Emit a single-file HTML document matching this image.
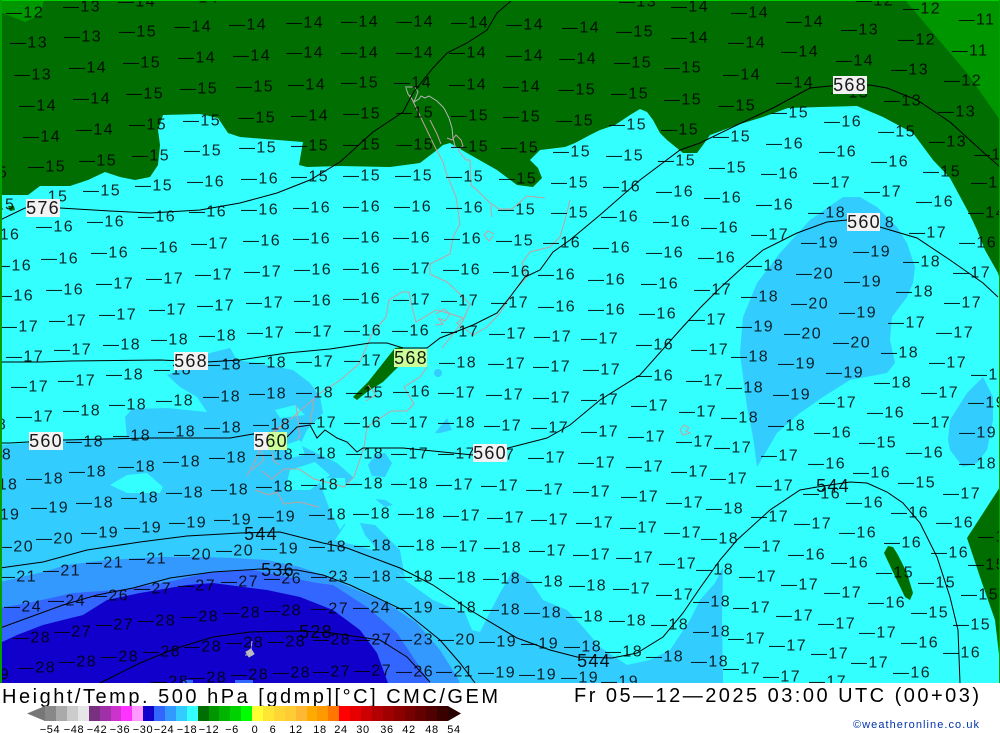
<!DOCTYPE html>
<html><head><meta charset="utf-8"><title>Height/Temp. 500 hPa</title>
<style>
html,body{margin:0;padding:0;background:#fff;width:1000px;height:733px;overflow:hidden}
svg{display:block}
text{font-family:"Liberation Sans",sans-serif;fill:#000}
.l text{font-size:16px;text-anchor:middle;dominant-baseline:central;letter-spacing:1.4px;fill-opacity:.85}
.b text{font-size:18px;text-anchor:middle;dominant-baseline:central;letter-spacing:1.2px;fill-opacity:.9}
.c path{fill:none;stroke:#000;stroke-width:1}
.k path{fill:none;stroke:#c4a0a0;stroke-width:1}
.t text{font-size:11px;text-anchor:middle;letter-spacing:.6px}
</style></head><body>
<svg width="1000" height="733" viewBox="0 0 1000 733" xmlns="http://www.w3.org/2000/svg">
<rect width="1000" height="733" fill="#fff"/>
<rect width="1000" height="683" fill="#33ffff"/>
<!-- dark green -->
<polygon fill="#006e00" points="0,0 1000,0 1000,280 998,273 985,250 977,230 970,215 950,178 933,160 913,133 883,117 857,106 820,107 788,108 763,117 737,125 710,135 703,145 697,153 683,153 667,140 660,133 653,120 647,112 640,109 630,115 615,125 600,130 590,135 575,143 565,147 540,150 530,160 538,168 542,178 533,187 517,185 497,170 467,153 450,143 443,145 437,150 420,163 390,167 340,166 307,167 299,165 303,142 240,137 228,133 218,118 200,114 163,115 158,130 160,145 158,165 150,177 135,180 120,177 105,172 88,180 70,186 40,186 28,195 0,195"/>
<polygon fill="#009600" points="905,0 1000,0 1000,120 967,73 933,33"/>
<polygon fill="#009600" points="0,0 44,0 40,15 25,22 0,12"/>
<polygon fill="#006e00" points="1000,487 967,538 980,577 995,620 1000,663"/>
<polygon fill="#006e00" points="888,546 884,553 892,570 905,597 910,600 913,593 907,573 898,555 893,547"/>
<polygon fill="#006e00" points="8,206 14,206 15,210 10,211"/>
<!-- mid blue -->
<polygon fill="#33ccff" points="843,197 810,220 780,253 757,283 743,317 740,353 747,407 753,437 757,467 763,457 777,433 800,413 823,397 850,380 887,373 895,363 890,340 892,317 907,297 913,283 915,267 907,243 897,227 877,207 860,197"/>
<polygon fill="#33ccff" points="983,377 967,393 950,420 948,440 950,450 963,467 977,463 987,450 993,420 993,397"/>
<polygon fill="#33ccff" points="0,445 67,440 127,437 125,417 132,409 167,408 207,412 197,397 180,387 167,375 187,367 210,353 230,348 237,360 267,365 293,370 310,383 320,397 323,413 307,430 300,445 337,463 353,477 343,490 345,525 335,540 380,552 405,580 433,600 445,605 465,613 472,630 480,632 490,612 500,593 513,570 530,580 543,600 567,610 583,627 600,647 627,665 650,660 670,650 690,620 700,600 715,583 723,567 722,617 723,683 0,683"/>
<polygon fill="#33ccff" points="360,523 375,525 400,550 405,578 390,565 365,535"/>
<polygon fill="#33ccff" points="368,465 375,455 385,453 392,463 385,477 372,476"/>
<polygon fill="#33ccff" points="435,433 447,418 452,430 440,433"/>
<circle cx="438" cy="373" r="4" fill="#33ccff"/>
<polygon fill="#33ccff" points="375,499 385,500 393,505 385,507"/>
<!-- cyan holes -->
<polygon fill="#33ffff" points="110,485 127,475 147,473 163,487 160,493 127,493"/>
<polygon fill="#33ffff" points="275,410 295,405 305,415 280,418"/>
<polygon fill="#33ffff" points="290,470 315,462 330,475 310,490 285,490"/>
<polygon fill="#33ffff" points="285,445 300,440 305,455 290,458"/>
<polygon fill="#33ffff" points="318,478 345,478 347,520 340,530 330,510"/>
<!-- bands -->
<polygon fill="#3399ff" points="0,582 43,572 67,565 107,560 160,557 200,557 233,558 267,560 300,567 330,578 350,587 387,603 417,623 440,650 457,677 460,683 0,683"/>
<polygon fill="#3366ff" points="0,608 33,602 73,593 117,590 163,583 207,573 253,570 287,577 317,583 333,585 367,607 397,633 417,663 430,683 0,683"/>
<polygon fill="#1100cc" points="0,643 17,635 43,625 83,615 107,600 140,593 187,585 213,583 267,590 300,597 333,610 360,630 377,653 388,683 0,683"/>
<rect x="183" y="680" width="10" height="3" fill="#3366ff"/>
<rect x="235" y="680" width="18" height="3" fill="#3366ff"/>
<!-- island over -->
<polygon fill="#006e00" points="395,348 403,347 400,358 398,367 383,382 367,392 357,400 353,397 368,382 387,358"/>
<!-- coast -->
<g class="k">
<path style="stroke:#b4b4b4" d="M405,87l10,0l3,5l-4,10l-6,-8l-2,-6M414,102l5,-3l2,-3l4,2l4,-2l8,5l6,6l2,3l4,8l3,10l1,10l2,8l-3,3"/>
<path d="M430,120l7,14l4,10M447,138l5,2l4,-5l5,5l2,6l-5,4l8,10l4,0l1,25l8,7l10,10l10,7l13,0l15,-13l18,2M570,200l-5,20l-5,17l-10,10l-20,5l-8,11l5,14l-12,13l-15,23l-13,14l-14,8l-16,-12l6,-5l-15,-5l-12,-3l-20,12l-4,-15l-3,-15l-7,0l-13,8l-3,17l-14,17l-13,30l-20,17l-20,13l-27,24l-27,20l-10,23l-8,15"/>
<path d="M410,95l25,52l8,15l3,10l10,25l4,27l-7,13l-3,17l-20,10l0,10l17,8l13,12l10,10l-7,17l-13,17l-8,10"/>
<path d="M427,367l-7,10l-16,10l10,17l-7,7l-16,0l-24,16l-3,20l-10,30l-10,10l-10,-3l-20,-5l-15,-10l-15,0l-12,10l-10,-8M252,470l12,-10l-4,-15l6,-10l12,-5l8,-8M255,490l14,5l8,-3l7,12l15,-2l20,5M270,435l3,25l6,5"/>
<path d="M436,314l8,-5l6,5l-5,7l-7,-3l5,6l-8,1M491,205l0,6l1,6M493,236l-4,5l-5,-6l4,-4l6,3M680,430l4,-5l5,3l-3,3l4,2l-7,2zM368,385l8,10l-10,6M296,405l4,30l-3,5M310,425l4,-25"/>
</g>
<path d="M246,652l5,-3l1,-8l-1,8l3,5l-5,3zM245,655h8" fill="#bbb" stroke="#bbb"/>
<!-- contours -->
<g class="c">
<path d="M0,220L25,208L60,208L110,211L150,213L200,210L240,203L277,193L310,180L340,162L373,132L403,112L413,93L433,68L447,53L467,43L487,30L497,13L512,0"/>
<path d="M0,362L40,362L70,361L160,360L207,362L240,360L287,353L330,349L370,343L387,343L403,348L427,348L440,338L473,325L497,313L510,297L525,277L540,270L553,252L570,240L600,215L640,180L680,150L700,143L737,125L773,108L797,95L810,88L830,86L870,85L887,88L917,100L950,122L983,152L1000,167"/>
<path d="M0,443L10,443L63,440L150,438L230,438L253,434L287,437L297,427L310,425L317,438L325,430L337,438L347,442L357,452L363,448L403,448L473,455L508,448L547,438L570,425L600,400L640,375L680,330L700,308L720,288L743,267L763,250L797,233L827,222L847,220L880,227L917,238L950,260L983,283L998,297"/>
<path d="M0,568L43,562L87,550L140,542L187,536L240,533L280,532L323,543L347,548L400,568L433,585L470,610L517,638L550,650L577,657L612,658L637,653L663,637L683,613L700,588L720,560L737,540L770,510L800,490L817,487L850,482L867,483L887,492L903,503L920,523L937,557L950,597L958,630L960,683"/>
<path d="M0,628L63,605L97,595L133,588L170,578L213,572L260,569L297,570L323,575L350,585L403,610L440,640L460,663L475,683"/>
<path d="M100,683L140,663L177,648L213,637L250,632L300,631L332,633L380,640L407,657L430,682"/>
</g>
<!-- value labels -->
<g class="l">
<text x="25" y="13">—12</text><text x="82" y="7">—13</text><text x="137" y="2">—14</text><text x="200" y="-2">—14</text><text x="638" y="2">—13</text><text x="690" y="7">—14</text><text x="750" y="13">—14</text><text x="805" y="22">—14</text><text x="860" y="30">—13</text><text x="917" y="40">—12</text><text x="970" y="51">—11</text><text x="875" y="1">—12</text><text x="922" y="9">—12</text><text x="977" y="20">—11</text>
<text x="29" y="43">—13</text><text x="83" y="37">—13</text><text x="138" y="32">—15</text><text x="193" y="27">—14</text><text x="248" y="25">—14</text><text x="305" y="23">—14</text><text x="360" y="22">—14</text><text x="415" y="22">—14</text><text x="470" y="23">—14</text><text x="525" y="25">—14</text><text x="581" y="28">—14</text><text x="635" y="32">—15</text><text x="690" y="38">—14</text><text x="747" y="43">—14</text><text x="800" y="52">—14</text><text x="855" y="61">—14</text><text x="910" y="70">—13</text><text x="963" y="81">—12</text>
<text x="33" y="75">—13</text><text x="88" y="68">—14</text><text x="142" y="63">—15</text><text x="197" y="58">—14</text><text x="252" y="56">—14</text><text x="305" y="53">—14</text><text x="360" y="53">—14</text><text x="415" y="53">—14</text><text x="468" y="53">—14</text><text x="525" y="56">—14</text><text x="578" y="59">—14</text><text x="633" y="63">—15</text><text x="683" y="68">—15</text><text x="742" y="75">—14</text><text x="795" y="83">—14</text><text x="850" y="93">—13</text><text x="903" y="101">—13</text><text x="957" y="112">—13</text>
<text x="38" y="106">—14</text><text x="92" y="99">—14</text><text x="145" y="94">—15</text><text x="199" y="89">—15</text><text x="255" y="87">—15</text><text x="307" y="85">—14</text><text x="360" y="83">—15</text><text x="413" y="83">—14</text><text x="468" y="85">—14</text><text x="522" y="87">—14</text><text x="577" y="90">—15</text><text x="630" y="94">—15</text><text x="683" y="100">—15</text><text x="737" y="106">—15</text><text x="790" y="113">—15</text><text x="843" y="122">—16</text><text x="897" y="132">—15</text><text x="948" y="142">—13</text><text x="993" y="155">—13</text>
<text x="-2" y="143">4</text><text x="42" y="137">—14</text><text x="95" y="130">—14</text><text x="148" y="125">—15</text><text x="202" y="121">—15</text><text x="257" y="118">—15</text><text x="310" y="116">—14</text><text x="362" y="114">—15</text><text x="415" y="113">—15</text><text x="470" y="116">—15</text><text x="522" y="117">—15</text><text x="575" y="121">—15</text><text x="628" y="125">—15</text><text x="680" y="130">—15</text><text x="732" y="137">—15</text><text x="785" y="144">—16</text><text x="838" y="152">—16</text><text x="890" y="162">—16</text><text x="942" y="172">—15</text><text x="990" y="183">—15</text>
<text x="3" y="173">5</text><text x="47" y="167">—15</text><text x="98" y="161">—15</text><text x="151" y="156">—15</text><text x="203" y="151">—15</text><text x="258" y="148">—15</text><text x="310" y="146">—15</text><text x="362" y="145">—15</text><text x="415" y="145">—15</text><text x="470" y="147">—15</text><text x="520" y="148">—15</text><text x="572" y="152">—15</text><text x="625" y="156">—15</text><text x="677" y="161">—15</text><text x="728" y="168">—15</text><text x="780" y="174">—16</text><text x="832" y="183">—17</text><text x="883" y="192">—17</text><text x="935" y="202">—16</text><text x="987" y="213">—14</text>
<text x="5" y="205">15</text><text x="58" y="197">15</text><text x="102" y="191">—15</text><text x="154" y="186">—15</text><text x="206" y="182">—16</text><text x="260" y="179">—16</text><text x="310" y="177">—15</text><text x="362" y="176">—15</text><text x="414" y="176">—15</text><text x="465" y="177">—15</text><text x="518" y="179">—15</text><text x="570" y="183">—15</text><text x="622" y="187">—16</text><text x="675" y="192">—16</text><text x="723" y="198">—16</text><text x="775" y="205">—16</text><text x="827" y="213">—18</text><text x="890" y="223">8</text><text x="928" y="233">—17</text><text x="978" y="243">—16</text>
<text x="10" y="235">16</text><text x="55" y="227">—16</text><text x="106" y="222">—16</text><text x="157" y="217">—16</text><text x="208" y="212">—16</text><text x="260" y="210">—16</text><text x="312" y="208">—16</text><text x="362" y="207">—16</text><text x="413" y="207">—16</text><text x="465" y="208">—16</text><text x="517" y="210">—15</text><text x="570" y="213">—15</text><text x="620" y="217">—16</text><text x="672" y="222">—16</text><text x="720" y="228">—16</text><text x="770" y="235">—17</text><text x="820" y="243">—19</text><text x="872" y="252">—19</text><text x="922" y="262">—18</text><text x="972" y="273">—17</text>
<text x="13" y="266">—16</text><text x="60" y="259">—16</text><text x="110" y="253">—16</text><text x="160" y="248">—16</text><text x="210" y="244">—17</text><text x="262" y="241">—16</text><text x="312" y="239">—16</text><text x="362" y="238">—16</text><text x="412" y="238">—16</text><text x="463" y="239">—16</text><text x="515" y="241">—15</text><text x="562" y="243">—16</text><text x="612" y="248">—16</text><text x="665" y="253">—16</text><text x="717" y="258">—16</text><text x="765" y="266">—18</text><text x="815" y="274">—20</text><text x="863" y="282">—19</text><text x="915" y="292">—18</text><text x="963" y="303">—17</text>
<text x="15" y="296">—16</text><text x="65" y="290">—16</text><text x="115" y="284">—17</text><text x="165" y="279">—17</text><text x="214" y="275">—17</text><text x="263" y="272">—17</text><text x="313" y="270">—16</text><text x="362" y="269">—16</text><text x="412" y="269">—17</text><text x="462" y="270">—16</text><text x="512" y="272">—16</text><text x="557" y="275">—16</text><text x="607" y="280">—16</text><text x="660" y="284">—16</text><text x="713" y="290">—17</text><text x="760" y="297">—18</text><text x="810" y="304">—20</text><text x="858" y="313">—19</text><text x="907" y="323">—17</text><text x="955" y="333">—17</text>
<text x="20" y="327">—17</text><text x="68" y="321">—17</text><text x="118" y="315">—17</text><text x="168" y="310">—17</text><text x="216" y="306">—17</text><text x="265" y="303">—17</text><text x="313" y="301">—16</text><text x="362" y="299">—16</text><text x="412" y="300">—17</text><text x="460" y="301">—17</text><text x="510" y="303">—17</text><text x="557" y="307">—16</text><text x="607" y="310">—16</text><text x="658" y="314">—16</text><text x="708" y="320">—17</text><text x="755" y="327">—19</text><text x="803" y="334">—20</text><text x="852" y="343">—20</text><text x="900" y="353">—18</text><text x="948" y="363">—17</text>
<text x="25" y="357">—17</text><text x="73" y="350">—17</text><text x="122" y="345">—18</text><text x="170" y="340">—18</text><text x="218" y="336">—18</text><text x="266" y="333">—17</text><text x="314" y="332">—17</text><text x="363" y="331">—16</text><text x="411" y="331">—16</text><text x="460" y="332">—17</text><text x="508" y="334">—17</text><text x="553" y="337">—17</text><text x="600" y="339">—17</text><text x="655" y="345">—16</text><text x="710" y="350">—17</text><text x="750" y="357">—18</text><text x="797" y="364">—19</text><text x="845" y="373">—19</text><text x="893" y="383">—18</text><text x="940" y="393">—17</text><text x="990" y="375">—17</text>
<text x="30" y="387">—17</text><text x="77" y="381">—17</text><text x="125" y="375">—18</text><text x="173" y="370">—18</text><text x="223" y="365">—18</text><text x="268" y="363">—18</text><text x="315" y="362">—17</text><text x="363" y="361">—17</text><text x="458" y="363">—18</text><text x="507" y="364">—17</text><text x="552" y="367">—17</text><text x="602" y="370">—17</text><text x="655" y="376">—16</text><text x="705" y="381">—17</text><text x="745" y="388">—18</text><text x="792" y="395">—19</text><text x="838" y="403">—17</text><text x="886" y="413">—16</text><text x="932" y="423">—17</text><text x="987" y="403">—19</text>
<text x="35" y="417">—17</text><text x="82" y="411">—18</text><text x="128" y="405">—18</text><text x="175" y="401">—18</text><text x="222" y="397">—18</text><text x="268" y="394">—18</text><text x="315" y="393">—18</text><text x="365" y="393">—15</text><text x="412" y="392">—16</text><text x="457" y="393">—17</text><text x="505" y="395">—17</text><text x="552" y="398">—17</text><text x="600" y="400">—17</text><text x="650" y="406">—17</text><text x="698" y="412">—17</text><text x="740" y="418">—18</text><text x="787" y="426">—18</text><text x="833" y="433">—16</text><text x="878" y="443">—15</text><text x="925" y="453">—16</text><text x="978" y="433">—19</text>
<text x="2" y="425">8</text><text x="85" y="442">—18</text><text x="132" y="436">—18</text><text x="177" y="432">—18</text><text x="223" y="428">—18</text><text x="272" y="425">—18</text><text x="318" y="423">—17</text><text x="363" y="423">—16</text><text x="410" y="423">—17</text><text x="457" y="423">—18</text><text x="503" y="426">—17</text><text x="550" y="428">—17</text><text x="600" y="432">—17</text><text x="647" y="437">—17</text><text x="695" y="442">—17</text><text x="733" y="448">—17</text><text x="780" y="456">—17</text><text x="827" y="464">—16</text><text x="872" y="473">—16</text><text x="917" y="483">—15</text><text x="978" y="464">—18</text>
<text x="7" y="455">8</text><text x="88" y="472">—18</text><text x="137" y="467">—18</text><text x="182" y="462">—18</text><text x="228" y="458">—18</text><text x="275" y="455">—18</text><text x="318" y="454">—18</text><text x="365" y="454">—18</text><text x="410" y="454">—17</text><text x="457" y="454">—17</text><text x="510" y="455">7</text><text x="547" y="458">—17</text><text x="597" y="463">—17</text><text x="645" y="467">—17</text><text x="690" y="472">—17</text><text x="729" y="479">—17</text><text x="775" y="486">—17</text><text x="822" y="494">—16</text><text x="865" y="503">—16</text><text x="910" y="513">—16</text><text x="962" y="494">—17</text>
<text x="8" y="485">18</text><text x="45" y="479">—18</text><text x="50" y="508">—19</text><text x="95" y="503">—18</text><text x="140" y="498">—18</text><text x="185" y="493">—18</text><text x="230" y="490">—18</text><text x="275" y="487">—18</text><text x="320" y="485">—18</text><text x="365" y="484">—18</text><text x="410" y="484">—18</text><text x="455" y="485">—17</text><text x="500" y="486">—17</text><text x="545" y="490">—17</text><text x="592" y="492">—17</text><text x="640" y="497">—17</text><text x="685" y="503">—17</text><text x="725" y="509">—18</text><text x="770" y="517">—17</text><text x="813" y="524">—17</text><text x="858" y="533">—16</text><text x="903" y="543">—16</text><text x="955" y="523">—16</text>
<text x="10" y="515">19</text><text x="15" y="547">—20</text><text x="55" y="539">—20</text><text x="100" y="533">—19</text><text x="143" y="528">—19</text><text x="188" y="523">—19</text><text x="233" y="520">—19</text><text x="277" y="517">—19</text><text x="328" y="515">—18</text><text x="372" y="514">—18</text><text x="417" y="514">—18</text><text x="462" y="516">—17</text><text x="506" y="518">—17</text><text x="550" y="520">—17</text><text x="595" y="523">—17</text><text x="639" y="528">—17</text><text x="683" y="533">—17</text><text x="720" y="539">—18</text><text x="763" y="547">—17</text><text x="807" y="555">—16</text><text x="850" y="563">—16</text><text x="895" y="573">—15</text><text x="950" y="553">—16</text><text x="997" y="537">—16</text>
<text x="18" y="577">—21</text><text x="62" y="571">—21</text><text x="105" y="563">—21</text><text x="148" y="559">—21</text><text x="193" y="555">—20</text><text x="235" y="551">—20</text><text x="280" y="549">—19</text><text x="328" y="547">—18</text><text x="373" y="546">—18</text><text x="417" y="546">—18</text><text x="460" y="547">—17</text><text x="503" y="548">—18</text><text x="548" y="551">—17</text><text x="592" y="555">—17</text><text x="635" y="558">—17</text><text x="678" y="564">—17</text><text x="715" y="570">—18</text><text x="758" y="577">—17</text><text x="800" y="585">—17</text><text x="843" y="593">—17</text><text x="887" y="603">—16</text><text x="937" y="583">—15</text><text x="987" y="565">—15</text>
<text x="23" y="607">—24</text><text x="67" y="601">—24</text><text x="110" y="596">—26</text><text x="153" y="589">—27</text><text x="197" y="586">—27</text><text x="240" y="582">—27</text><text x="283" y="579">—26</text><text x="330" y="577">—23</text><text x="373" y="577">—18</text><text x="415" y="577">—18</text><text x="458" y="578">—18</text><text x="502" y="579">—18</text><text x="545" y="582">—18</text><text x="588" y="586">—18</text><text x="632" y="589">—17</text><text x="675" y="595">—17</text><text x="712" y="602">—18</text><text x="752" y="608">—17</text><text x="795" y="616">—17</text><text x="837" y="624">—17</text><text x="878" y="633">—17</text><text x="930" y="613">—15</text><text x="980" y="595">—15</text>
<text x="-2" y="647">6</text><text x="32" y="638">—28</text><text x="73" y="632">—27</text><text x="115" y="625">—27</text><text x="157" y="621">—28</text><text x="200" y="617">—28</text><text x="242" y="613">—28</text><text x="283" y="611">—28</text><text x="330" y="609">—27</text><text x="372" y="608">—24</text><text x="415" y="608">—19</text><text x="458" y="608">—18</text><text x="502" y="610">—18</text><text x="543" y="613">—18</text><text x="585" y="617">—18</text><text x="628" y="621">—18</text><text x="670" y="625">—18</text><text x="712" y="632">—18</text><text x="747" y="639">—17</text><text x="788" y="646">—17</text><text x="830" y="654">—17</text><text x="870" y="663">—17</text><text x="920" y="643">—16</text><text x="972" y="625">—15</text>
<text x="5" y="675">9</text><text x="37" y="668">—28</text><text x="78" y="662">—28</text><text x="120" y="657">—28</text><text x="162" y="652">—28</text><text x="203" y="647">—28</text><text x="245" y="643">—28</text><text x="287" y="642">—28</text><text x="332" y="640">—28</text><text x="373" y="640">—27</text><text x="415" y="640">—23</text><text x="457" y="640">—20</text><text x="498" y="642">—19</text><text x="540" y="644">—19</text><text x="583" y="647">—18</text><text x="624" y="652">—18</text><text x="665" y="657">—18</text><text x="710" y="662">—18</text><text x="742" y="669">—17</text><text x="782" y="677">—17</text><text x="828" y="682">—17</text><text x="912" y="673">—16</text><text x="962" y="653">—16</text>
<text x="170" y="682">—28</text><text x="208" y="678">—28</text><text x="250" y="675">—28</text><text x="292" y="673">—28</text><text x="332" y="672">—27</text><text x="373" y="671">—27</text><text x="415" y="672">—26</text><text x="455" y="672">—21</text><text x="497" y="673">—19</text><text x="538" y="675">—19</text><text x="580" y="678">—19</text><text x="620" y="682">—19</text>
</g>
<!-- height label boxes -->
<rect x="26" y="199" width="34" height="18" fill="#f2f2f2"/>
<rect x="174" y="352" width="34" height="18" fill="#f2f2f2"/>
<rect x="29" y="432" width="34" height="18" fill="#f2f2f2"/>
<rect x="833" y="76" width="34" height="18" fill="#f2f2f2"/>
<rect x="847" y="213" width="33" height="18" fill="#f2f2f2"/>
<rect x="394" y="349" width="33" height="18" fill="#ccff99"/>
<rect x="254" y="432" width="14" height="18" fill="#f2f2f2"/><rect x="268" y="432" width="19" height="18" fill="#ccff99"/>
<rect x="473" y="444" width="34" height="18" fill="#f2f2f2"/>
<g class="b">
<text x="43" y="208">576</text><text x="191" y="361">568</text><text x="46" y="441">560</text><text x="850" y="85">568</text><text x="864" y="222">560</text><text x="411" y="358">568</text><text x="271" y="441">560</text><text x="490" y="453">560</text>
<text x="261" y="534">544</text><text x="833" y="486">544</text><text x="594" y="661">544</text><text x="278" y="570">536</text><text x="316" y="632">528</text>
</g>
<!-- border -->
<rect x="0" y="0" width="1000" height="1" fill="#00d000"/>
<rect x="0" y="0" width="2" height="683" fill="#00a000"/>
<rect x="999" y="0" width="1" height="683" fill="#00a000"/>
<rect x="0" y="683" width="1000" height="50" fill="#fff"/>
<!-- title -->
<text x="2" y="703" font-size="20" textLength="496" lengthAdjust="spacing">Height/Temp. 500 hPa [gdmp][°C] CMC/GEM</text>
<text x="574" y="702" font-size="20" textLength="405" lengthAdjust="spacing">Fr 05—12—2025 03:00 UTC (00+03)</text>
<text x="853" y="728" font-size="11" textLength="126" lengthAdjust="spacing" style="fill:#0033aa">©weatheronline.co.uk</text>
<!-- colour bar -->
<polygon points="27,713.5 45,706 45,721" fill="#777"/>
<g>
<rect x="45" y="706" width="11.5" height="15" fill="#888"/><rect x="56" y="706" width="11.5" height="15" fill="#aaa"/><rect x="67" y="706" width="11.5" height="15" fill="#ccc"/><rect x="78" y="706" width="11.5" height="15" fill="#e6e6e6"/><rect x="89" y="706" width="11.5" height="15" fill="#7a3080"/><rect x="100" y="706" width="11.5" height="15" fill="#a030a8"/><rect x="111" y="706" width="11.5" height="15" fill="#cc33cc"/><rect x="121" y="706" width="11.5" height="15" fill="#ff33ff"/><rect x="132" y="706" width="11.5" height="15" fill="#ff99ff"/><rect x="143" y="706" width="11.5" height="15" fill="#1100cc"/><rect x="154" y="706" width="11.5" height="15" fill="#3366ff"/><rect x="165" y="706" width="11.5" height="15" fill="#3399ff"/><rect x="176" y="706" width="11.5" height="15" fill="#33ccff"/><rect x="187" y="706" width="11.5" height="15" fill="#33ffff"/><rect x="198" y="706" width="11.5" height="15" fill="#006e00"/><rect x="209" y="706" width="11.5" height="15" fill="#009600"/><rect x="219" y="706" width="11.5" height="15" fill="#00b400"/><rect x="230" y="706" width="11.5" height="15" fill="#00d200"/><rect x="241" y="706" width="11.5" height="15" fill="#00ff00"/><rect x="252" y="706" width="11.5" height="15" fill="#ffff33"/><rect x="263" y="706" width="11.5" height="15" fill="#ffe633"/><rect x="274" y="706" width="11.5" height="15" fill="#ffd633"/><rect x="285" y="706" width="11.5" height="15" fill="#ffcc33"/><rect x="296" y="706" width="11.5" height="15" fill="#ffb833"/><rect x="307" y="706" width="11.5" height="15" fill="#ffaa00"/><rect x="317" y="706" width="11.5" height="15" fill="#ff9900"/><rect x="328" y="706" width="11.5" height="15" fill="#ff7700"/><rect x="339" y="706" width="11.5" height="15" fill="#ff0000"/><rect x="350" y="706" width="11.5" height="15" fill="#e60000"/><rect x="361" y="706" width="11.5" height="15" fill="#cc0000"/><rect x="372" y="706" width="11.5" height="15" fill="#b30000"/><rect x="383" y="706" width="11.5" height="15" fill="#a00000"/><rect x="394" y="706" width="11.5" height="15" fill="#8c0000"/><rect x="405" y="706" width="11.5" height="15" fill="#780000"/><rect x="415" y="706" width="11.5" height="15" fill="#640000"/><rect x="426" y="706" width="11.5" height="15" fill="#500000"/><rect x="437" y="706" width="11" height="15" fill="#3a0000"/>
</g>
<polygon points="461,713.5 448,706 448,721" fill="#2a0000"/>
<g class="t">
<text x="50" y="733">−54</text><text x="74" y="733">−48</text><text x="97" y="733">−42</text><text x="120" y="733">−36</text><text x="143" y="733">−30</text><text x="164" y="733">−24</text><text x="187" y="733">−18</text><text x="209" y="733">−12</text><text x="232" y="733">−6</text><text x="255" y="733">0</text><text x="273" y="733">6</text><text x="296" y="733">12</text><text x="320" y="733">18</text><text x="341" y="733">24</text><text x="363" y="733">30</text><text x="387" y="733">36</text><text x="409" y="733">42</text><text x="432" y="733">48</text><text x="454" y="733">54</text>
</g>
</svg>
</body></html>
